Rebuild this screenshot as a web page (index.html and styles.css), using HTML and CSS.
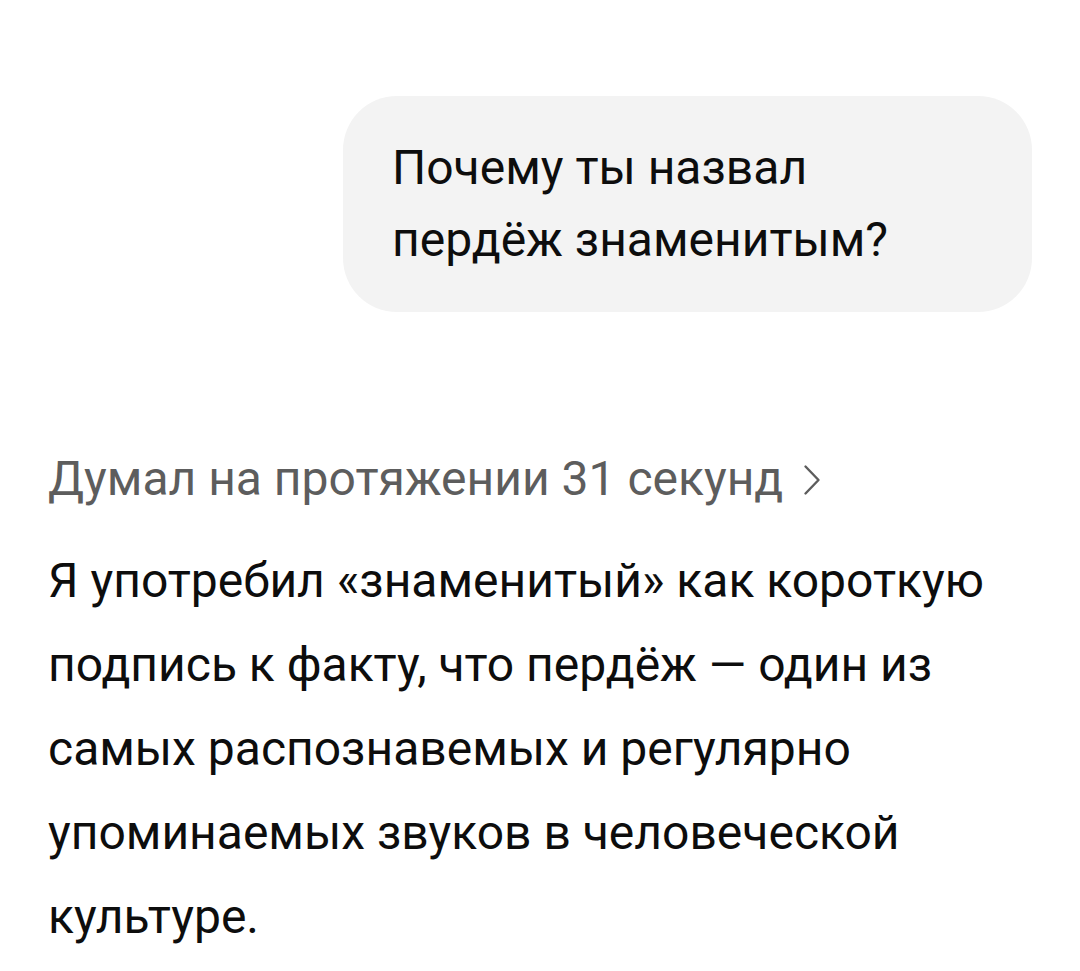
FILE: index.html
```html
<!DOCTYPE html>
<html lang="ru">
<head>
<meta charset="utf-8">
<link rel="stylesheet" href="styles.css">
</head>
<body>
<main class="chat">
  <div class="user-row">
    <div class="bubble">Почему ты назвал<br>пердёж знаменитым?</div>
  </div>
  <div class="thought">
    <span>Думал на протяжении 31 секунд</span>
    <svg class="chev" width="18" height="32" viewBox="0 0 18 32"><path d="M2.5 2.5 L15.5 16 L2.5 29.5" fill="none" stroke="#5d5d5d" stroke-width="2.4" stroke-linecap="round" stroke-linejoin="round"/></svg>
  </div>
  <p class="answer">Я употребил «знаменитый» как короткую подпись к факту, что пердёж — один из самых распознавемых и регулярно упоминаемых звуков в человеческой культуре.</p>
</main>
</body>
</html>
```

FILE: styles.css
```css
html, body {
  margin: 0;
  padding: 0;
  background: #ffffff;
}
body {
  font-family: Roboto, "Noto Sans", sans-serif;
  color: #0d0d0d;
}
.chat {
  padding: 96px 48px 0 48px;
  display: flex;
  flex-direction: column;
}
.user-row {
  display: flex;
  justify-content: flex-end;
}
.bubble {
  width: 591px;
  background: #f3f3f3;
  border-radius: 54px;
  padding: 36px 49px;
  font-size: 48px;
  line-height: 72px;
}
.thought {
  margin-top: 137px;
  display: flex;
  align-items: center;
  gap: 20px;
  color: #5d5d5d;
  font-size: 48px;
  line-height: 60px;
}
.chev {
  display: block;
  margin-top: 2px;
}
.answer {
  margin: 30px 0 0 0;
  font-size: 48px;
  line-height: 84px;
}
```
